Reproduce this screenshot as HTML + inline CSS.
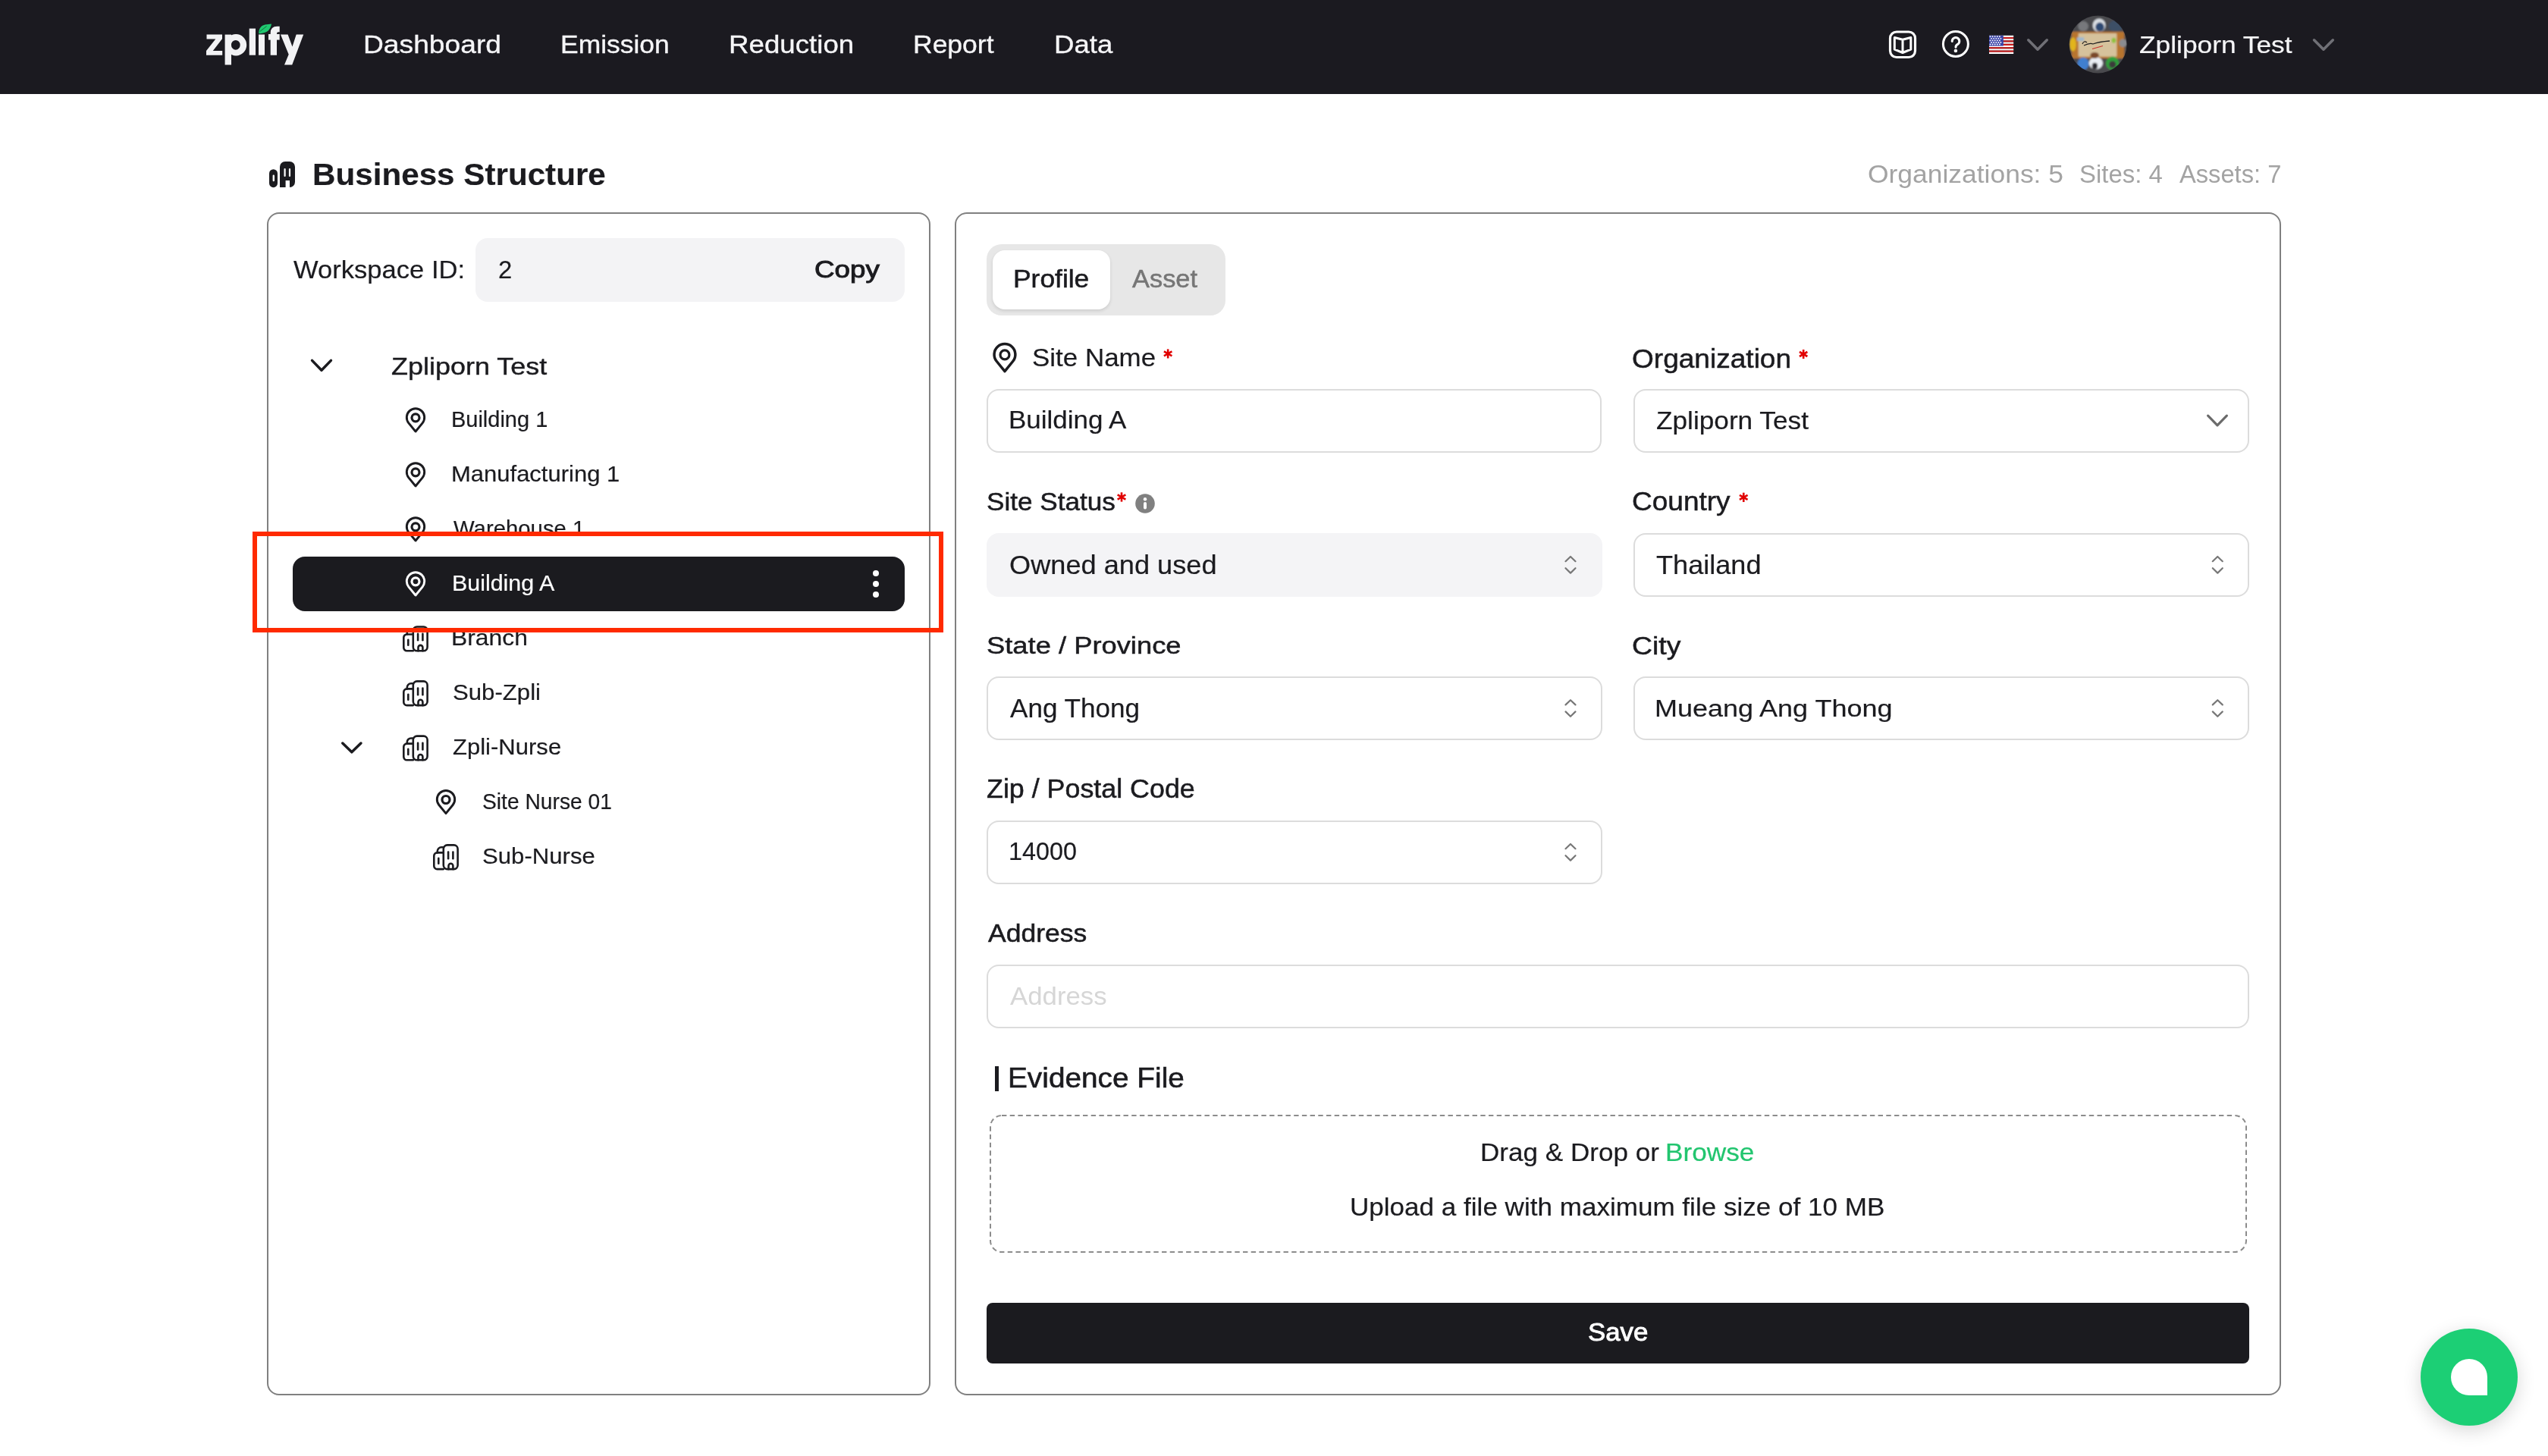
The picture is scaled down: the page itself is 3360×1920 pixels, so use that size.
<!DOCTYPE html>
<html><head><meta charset="utf-8"><title>Business Structure</title>
<style>
html,body{margin:0;padding:0;}
body{width:3360px;height:1920px;position:relative;overflow:hidden;background:#ffffff;font-family:"Liberation Sans",sans-serif;}
.a{position:absolute;box-sizing:border-box;}
.t{position:absolute;white-space:nowrap;line-height:1;transform-origin:0 0;font-family:"Liberation Sans",sans-serif;}
</style></head><body>
<div class="a" style="left:0;top:0;width:3360px;height:124px;background:#1b1a20"></div>
<div class="a" style="left:352px;top:280px;width:875px;height:1560px;border:2px solid #808080;border-radius:16px;background:#fff"></div>
<div class="a" style="left:1259px;top:280px;width:1749px;height:1560px;border:2px solid #808080;border-radius:16px;background:#fff"></div>
<div class="a" style="left:627px;top:314px;width:566px;height:84px;border-radius:16px;background:#f3f3f5"></div>
<div class="a" style="left:386px;top:734px;width:807px;height:72px;border-radius:16px;background:#1b1b1f"></div>
<div class="a" style="left:1301px;top:322px;width:315px;height:94px;border-radius:20px;background:#e7e7e7"></div>
<div class="a" style="left:1308.7px;top:329.7px;width:155.4px;height:78.3px;border-radius:16px;background:#fff;box-shadow:0 2px 4px rgba(0,0,0,0.12)"></div>
<div class="a" style="left:1301.3px;top:513px;width:811px;height:84px;border:2px solid #dcdcdc;border-radius:16px;background:#fff"></div>
<div class="a" style="left:2153.7px;top:513px;width:812.2px;height:84px;border:2px solid #dcdcdc;border-radius:16px;background:#fff"></div>
<div class="a" style="left:1301px;top:702.5px;width:812px;height:84px;border-radius:16px;background:#f4f4f6"></div>
<div class="a" style="left:2153.7px;top:703px;width:812.2px;height:84px;border:2px solid #dcdcdc;border-radius:16px;background:#fff"></div>
<div class="a" style="left:1301px;top:892.3px;width:811.5px;height:84px;border:2px solid #dcdcdc;border-radius:16px;background:#fff"></div>
<div class="a" style="left:2153.7px;top:892.2px;width:812.2px;height:84px;border:2px solid #dcdcdc;border-radius:16px;background:#fff"></div>
<div class="a" style="left:1301px;top:1082.3px;width:811.5px;height:84px;border:2px solid #dcdcdc;border-radius:16px;background:#fff"></div>
<div class="a" style="left:1301px;top:1272px;width:1665px;height:84px;border:2px solid #dcdcdc;border-radius:16px;background:#fff"></div>
<div class="a" style="left:1312.3px;top:1406px;width:4.7px;height:32.7px;background:#1b1b1f"></div>
<svg class="a" style="left:1305px;top:1469.5px" width="1658" height="182"><rect x="1" y="1" width="1656" height="180" rx="15" fill="none" stroke="#8c8c8c" stroke-width="2" stroke-dasharray="6.4 4.3"/></svg>
<div class="a" style="left:1301px;top:1717.6px;width:1665px;height:80px;border-radius:8px;background:#1b1b1f"></div>
<div class="a" style="left:3192px;top:1752px;width:128px;height:128px;border-radius:50%;background:#1ccf75;box-shadow:0 6px 24px rgba(0,0,0,0.16)"></div>
<div class="a" style="left:3232.3px;top:1792.3px;width:48px;height:48px;border-radius:24px 24px 0 24px;background:#fff"></div>
<svg class="a" style="left:0;top:0" width="3360" height="1920" viewBox="0 0 3360 1920">
<g fill="#f2f2f4">
<polygon points="272.5,45.5 293,45.5 293,51.3 280.8,66.9 293.2,66.9 293.2,72.7 272,72.7 272,67 284.3,51.4 272.5,51.4"/>
<rect x="296.6" y="45.6" width="8.4" height="39.9"/>
<path fill-rule="evenodd" d="M311.2,45 A14,14.2 0 1 1 311.2,73.4 A14,14.2 0 1 1 311.2,45 Z M310.8,52.9 A5.9,6.4 0 1 0 310.8,65.7 A5.9,6.4 0 1 0 310.8,52.9 Z"/>
<rect x="328.7" y="37.6" width="8.3" height="35.1"/>
<rect x="341" y="45.5" width="8" height="27.2"/>
<path d="M356.7,72.7 V43.5 Q356.7,34.8 365.5,34.8 H368.7 V42.2 H367 Q365,42.2 365,44.5 V72.7 Z"/>
<rect x="354" y="45" width="14.7" height="7.6"/>
<polygon points="370,45.5 379.6,45.5 385.5,61.5 390.7,45.5 400.2,45.5 385.2,85.5 375,85.5 380.7,71.8"/>
</g>
<path d="M341.2,44.3 C341.3,38.5 343.5,34 349.5,32.6 L358,31.4 C357.2,35.8 355,40.6 350.3,42.4 C347.3,43.6 344.2,44.1 341.2,44.3 Z" fill="#20c870"/><line x1="342.6" y1="41.6" x2="351.6" y2="34.6" stroke="#0e5a30" stroke-width="0.8"/>
<g fill="none" stroke="#ffffff" stroke-width="3.2" stroke-linejoin="round" stroke-linecap="round">
<rect x="2492.5" y="42" width="33" height="33.5" rx="8.5"/>
<path d="M2498.3,49.5 L2509,52.3 L2519.8,49.5 V65.2 L2509,69.5 L2498.3,65.2 Z M2509,52.3 V69" stroke-width="3"/>
<circle cx="2578.9" cy="58" r="16.5" stroke-width="3"/>
<path d="M2574.2,54.4 A4.8,4.8 0 1 1 2581.6,58.4 Q2579,59.8 2579,62.2" stroke-width="3"/>
</g>
<circle cx="2578.9" cy="67" r="2.3" fill="#fff"/>
<g><rect x="2623" y="46.80" width="32.2" height="2.20" fill="#fff"/><rect x="2623" y="49.00" width="32.2" height="2.20" fill="#c81e1e"/><rect x="2623" y="51.20" width="32.2" height="2.20" fill="#fff"/><rect x="2623" y="53.40" width="32.2" height="2.20" fill="#c81e1e"/><rect x="2623" y="55.60" width="32.2" height="2.20" fill="#fff"/><rect x="2623" y="57.80" width="32.2" height="2.20" fill="#c81e1e"/><rect x="2623" y="60.00" width="32.2" height="2.20" fill="#fff"/><rect x="2623" y="62.20" width="32.2" height="2.20" fill="#c81e1e"/><rect x="2623" y="64.40" width="32.2" height="2.20" fill="#fff"/><rect x="2623" y="66.60" width="32.2" height="2.20" fill="#c81e1e"/><rect x="2623" y="68.80" width="32.2" height="2.20" fill="#fff"/><rect x="2623" y="46.8" width="18.8" height="13.8" fill="#3a44a8"/><circle cx="2624.50" cy="48.30" r="0.95" fill="#fff"/><circle cx="2627.60" cy="48.30" r="0.95" fill="#fff"/><circle cx="2630.70" cy="48.30" r="0.95" fill="#fff"/><circle cx="2633.80" cy="48.30" r="0.95" fill="#fff"/><circle cx="2636.90" cy="48.30" r="0.95" fill="#fff"/><circle cx="2626.05" cy="50.85" r="0.95" fill="#fff"/><circle cx="2629.15" cy="50.85" r="0.95" fill="#fff"/><circle cx="2632.25" cy="50.85" r="0.95" fill="#fff"/><circle cx="2635.35" cy="50.85" r="0.95" fill="#fff"/><circle cx="2638.45" cy="50.85" r="0.95" fill="#fff"/><circle cx="2624.50" cy="53.40" r="0.95" fill="#fff"/><circle cx="2627.60" cy="53.40" r="0.95" fill="#fff"/><circle cx="2630.70" cy="53.40" r="0.95" fill="#fff"/><circle cx="2633.80" cy="53.40" r="0.95" fill="#fff"/><circle cx="2636.90" cy="53.40" r="0.95" fill="#fff"/><circle cx="2626.05" cy="55.95" r="0.95" fill="#fff"/><circle cx="2629.15" cy="55.95" r="0.95" fill="#fff"/><circle cx="2632.25" cy="55.95" r="0.95" fill="#fff"/><circle cx="2635.35" cy="55.95" r="0.95" fill="#fff"/><circle cx="2638.45" cy="55.95" r="0.95" fill="#fff"/><circle cx="2624.50" cy="58.50" r="0.95" fill="#fff"/><circle cx="2627.60" cy="58.50" r="0.95" fill="#fff"/><circle cx="2630.70" cy="58.50" r="0.95" fill="#fff"/><circle cx="2633.80" cy="58.50" r="0.95" fill="#fff"/><circle cx="2636.90" cy="58.50" r="0.95" fill="#fff"/></g>
<polyline points="2674.75,52.75 2687.0,65.25 2699.25,52.75" fill="none" stroke="#707076" stroke-width="3.5" stroke-linecap="round" stroke-linejoin="round"/>
<polyline points="3051.55,52.75 3063.95,65.25 3076.35,52.75" fill="none" stroke="#707076" stroke-width="3.5" stroke-linecap="round" stroke-linejoin="round"/>
<defs><clipPath id="av"><circle cx="2766.6" cy="58.5" r="38"/></clipPath>
<filter id="bl" x="-10%" y="-10%" width="120%" height="120%"><feGaussianBlur stdDeviation="0.9"/></filter></defs>
<g clip-path="url(#av)"><g filter="url(#bl)"><rect x="2728" y="20" width="78" height="78" fill="#4a4a4e"/><ellipse cx="2747.1" cy="34.6" rx="6.9" ry="6.6" fill="#77787c"/><ellipse cx="2768.1" cy="33.4" rx="8.4" ry="8.9" fill="#d9dde2"/><ellipse cx="2769.0" cy="35.7" rx="5.8" ry="6.1" fill="#2f4a72"/><ellipse cx="2790.0" cy="34.3" rx="9.5" ry="7.5" fill="#3d4f66"/><rect x="2731.8" y="41.8" width="69.5" height="35.2" rx="2" fill="#b8742f"/><rect x="2740.7" y="44.1" width="50.7" height="30.6" rx="1" fill="#d6c29c"/><rect x="2739.0" y="49.3" width="9.2" height="4.6" rx="0" fill="#9fb8d0"/><ellipse cx="2787.4" cy="53.3" rx="2.9" ry="3.5" fill="#8fc23a"/><ellipse cx="2733.5" cy="58.5" rx="4.3" ry="9.2" fill="#e2b51d"/><ellipse cx="2799.5" cy="56.8" rx="5.2" ry="5.2" fill="#8a8c90"/><ellipse cx="2747.1" cy="83.9" rx="7.5" ry="8.1" fill="#3f7fd0"/><ellipse cx="2763.8" cy="83.3" rx="9.2" ry="8.1" fill="#e8edf3"/><ellipse cx="2762.4" cy="87.1" rx="3.7" ry="4.3" fill="#2a2a30"/><ellipse cx="2785.6" cy="83.3" rx="8.5" ry="8.7" fill="#2da03a"/><ellipse cx="2785.7" cy="85.1" rx="4.6" ry="4.6" fill="#3a3a3a"/><ellipse cx="2762.1" cy="72.9" rx="5.8" ry="4.0" fill="#7a4a2a"/></g>
<path d="M2746,58 q2,-5 6,-2 M2748,60 q8,-4 12,-2 q8,-3 22,-4" stroke="#222" stroke-width="1.3" fill="none"/>
<line x1="2759" y1="64.5" x2="2773" y2="60.5" stroke="#c8302a" stroke-width="1.1"/>
</g>
<g fill="#1b1b1f">
<rect x="355" y="223.2" width="11" height="24" rx="5.5"/>
<path d="M369,247 V220 A7,7 0 0 1 376,213 H382 A7,7 0 0 1 389,220 V240 A7,7 0 0 1 382,247 V238 H376.6 V247 Z"/>
</g>
<g fill="#fff"><rect x="359.6" y="230.6" width="2.4" height="8.6" rx="1.2"/><rect x="374.5" y="222" width="2.2" height="11" rx="1.1"/><rect x="380.9" y="222" width="2.2" height="11" rx="1.1"/></g>
<polyline points="411.55,475.35 424.0,488.25 436.45,475.35" fill="none" stroke="#1b1b1f" stroke-width="3.5" stroke-linecap="round" stroke-linejoin="round"/>
<polyline points="451.75,980.05 463.85,991.85 475.95,980.05" fill="none" stroke="#1b1b1f" stroke-width="3.5" stroke-linecap="round" stroke-linejoin="round"/>
<g transform="translate(535,537.7) scale(1.0)" fill="none" stroke="#1b1b1f" stroke-width="2.90" stroke-linejoin="round">
<path d="M13,31.3 L3.87,20.12 A11.7,11.7 0 1 1 22.13,20.12 Z"/><circle cx="13" cy="13.1" r="5.0" stroke-width="3.20"/></g>
<g transform="translate(535,609.7) scale(1.0)" fill="none" stroke="#1b1b1f" stroke-width="2.90" stroke-linejoin="round">
<path d="M13,31.3 L3.87,20.12 A11.7,11.7 0 1 1 22.13,20.12 Z"/><circle cx="13" cy="13.1" r="5.0" stroke-width="3.20"/></g>
<g transform="translate(535,681.7) scale(1.0)" fill="none" stroke="#1b1b1f" stroke-width="2.90" stroke-linejoin="round">
<path d="M13,31.3 L3.87,20.12 A11.7,11.7 0 1 1 22.13,20.12 Z"/><circle cx="13" cy="13.1" r="5.0" stroke-width="3.20"/></g>
<g transform="translate(535,753.7) scale(1.0)" fill="none" stroke="#ffffff" stroke-width="2.90" stroke-linejoin="round">
<path d="M13,31.3 L3.87,20.12 A11.7,11.7 0 1 1 22.13,20.12 Z"/><circle cx="13" cy="13.1" r="5.0" stroke-width="3.20"/></g>
<g transform="translate(575,1041.4) scale(1.0)" fill="none" stroke="#1b1b1f" stroke-width="2.90" stroke-linejoin="round">
<path d="M13,31.3 L3.87,20.12 A11.7,11.7 0 1 1 22.13,20.12 Z"/><circle cx="13" cy="13.1" r="5.0" stroke-width="3.20"/></g>
<g transform="translate(531,825.2)" fill="none" stroke="#1b1b1f" stroke-width="2.6" stroke-linecap="round" stroke-linejoin="round">
<path d="M13.8,33 H5.5 A4.2,4.2 0 0 1 1.3,28.8 V15.5 A4.2,4.2 0 0 1 5.5,11.3 H13.8"/>
<path d="M5.8,11.3 V9.4 A5.2,5.2 0 0 1 11,4.2 H13.8"/>
<rect x="13.8" y="1.3" width="18.8" height="31.7" rx="5"/>
<line x1="7.3" y1="18.6" x2="7.3" y2="25.6"/><line x1="20.1" y1="10.5" x2="20.1" y2="19.1"/><line x1="26.4" y1="10.5" x2="26.4" y2="19.1"/>
<path d="M20.5,33 V28.6 A2.95,2.95 0 0 1 26.4,28.6 V33"/></g>
<g transform="translate(531,897.1)" fill="none" stroke="#1b1b1f" stroke-width="2.6" stroke-linecap="round" stroke-linejoin="round">
<path d="M13.8,33 H5.5 A4.2,4.2 0 0 1 1.3,28.8 V15.5 A4.2,4.2 0 0 1 5.5,11.3 H13.8"/>
<path d="M5.8,11.3 V9.4 A5.2,5.2 0 0 1 11,4.2 H13.8"/>
<rect x="13.8" y="1.3" width="18.8" height="31.7" rx="5"/>
<line x1="7.3" y1="18.6" x2="7.3" y2="25.6"/><line x1="20.1" y1="10.5" x2="20.1" y2="19.1"/><line x1="26.4" y1="10.5" x2="26.4" y2="19.1"/>
<path d="M20.5,33 V28.6 A2.95,2.95 0 0 1 26.4,28.6 V33"/></g>
<g transform="translate(531,969.3)" fill="none" stroke="#1b1b1f" stroke-width="2.6" stroke-linecap="round" stroke-linejoin="round">
<path d="M13.8,33 H5.5 A4.2,4.2 0 0 1 1.3,28.8 V15.5 A4.2,4.2 0 0 1 5.5,11.3 H13.8"/>
<path d="M5.8,11.3 V9.4 A5.2,5.2 0 0 1 11,4.2 H13.8"/>
<rect x="13.8" y="1.3" width="18.8" height="31.7" rx="5"/>
<line x1="7.3" y1="18.6" x2="7.3" y2="25.6"/><line x1="20.1" y1="10.5" x2="20.1" y2="19.1"/><line x1="26.4" y1="10.5" x2="26.4" y2="19.1"/>
<path d="M20.5,33 V28.6 A2.95,2.95 0 0 1 26.4,28.6 V33"/></g>
<g transform="translate(571,1113.1)" fill="none" stroke="#1b1b1f" stroke-width="2.6" stroke-linecap="round" stroke-linejoin="round">
<path d="M13.8,33 H5.5 A4.2,4.2 0 0 1 1.3,28.8 V15.5 A4.2,4.2 0 0 1 5.5,11.3 H13.8"/>
<path d="M5.8,11.3 V9.4 A5.2,5.2 0 0 1 11,4.2 H13.8"/>
<rect x="13.8" y="1.3" width="18.8" height="31.7" rx="5"/>
<line x1="7.3" y1="18.6" x2="7.3" y2="25.6"/><line x1="20.1" y1="10.5" x2="20.1" y2="19.1"/><line x1="26.4" y1="10.5" x2="26.4" y2="19.1"/>
<path d="M20.5,33 V28.6 A2.95,2.95 0 0 1 26.4,28.6 V33"/></g>
<g fill="#fff"><circle cx="1155" cy="756" r="4"/><circle cx="1155" cy="770" r="4"/><circle cx="1155" cy="784" r="4"/></g>
<g transform="translate(1309.5,452.3) scale(1.19)" fill="none" stroke="#1b1b1f" stroke-width="2.94" stroke-linejoin="round">
<path d="M13,31.3 L3.87,20.12 A11.7,11.7 0 1 1 22.13,20.12 Z"/><circle cx="13" cy="13.1" r="5.0" stroke-width="2.69"/></g>
<g stroke="#e10000" stroke-width="2.6"><line x1="1540.15" y1="460.40" x2="1540.15" y2="472.50"/><line x1="1534.91" y1="463.43" x2="1545.39" y2="469.47"/><line x1="1545.39" y1="463.43" x2="1534.91" y2="469.47"/></g>
<g stroke="#e10000" stroke-width="2.6"><line x1="2378.15" y1="461.00" x2="2378.15" y2="473.00"/><line x1="2372.95" y1="464.00" x2="2383.35" y2="470.00"/><line x1="2383.35" y1="464.00" x2="2372.95" y2="470.00"/></g>
<g stroke="#e10000" stroke-width="2.6"><line x1="1479.00" y1="649.30" x2="1479.00" y2="661.60"/><line x1="1473.67" y1="652.38" x2="1484.33" y2="658.53"/><line x1="1484.33" y1="652.38" x2="1473.67" y2="658.53"/></g>
<g stroke="#e10000" stroke-width="2.6"><line x1="2299.25" y1="649.70" x2="2299.25" y2="662.00"/><line x1="2293.92" y1="652.78" x2="2304.58" y2="658.92"/><line x1="2304.58" y1="652.78" x2="2293.92" y2="658.92"/></g>
<circle cx="1510" cy="664" r="12.8" fill="#808080"/><circle cx="1510" cy="658.3" r="2.2" fill="#fff"/><rect x="1508" y="662" width="4" height="9.6" rx="2" fill="#fff"/>
<polyline points="2911.6,548.2 2924.0,560.9 2936.4,548.2" fill="none" stroke="#6b6b6b" stroke-width="3.2" stroke-linecap="round" stroke-linejoin="round"/>
<g fill="none" stroke="#777" stroke-width="2.2" stroke-linecap="round" stroke-linejoin="round">
<polyline points="2064.5,740.2 2071,734 2077.5,740.2"/><polyline points="2064.5,749.2 2071,755.6 2077.5,749.2"/></g>
<g fill="none" stroke="#777" stroke-width="2.2" stroke-linecap="round" stroke-linejoin="round">
<polyline points="2917.8,740.2 2924.3,734 2930.8,740.2"/><polyline points="2917.8,749.2 2924.3,755.6 2930.8,749.2"/></g>
<g fill="none" stroke="#777" stroke-width="2.2" stroke-linecap="round" stroke-linejoin="round">
<polyline points="2064.5,929.4000000000001 2071,923.2 2077.5,929.4000000000001"/><polyline points="2064.5,938.4000000000001 2071,944.8000000000001 2077.5,938.4000000000001"/></g>
<g fill="none" stroke="#777" stroke-width="2.2" stroke-linecap="round" stroke-linejoin="round">
<polyline points="2917.8,929.4000000000001 2924.3,923.2 2930.8,929.4000000000001"/><polyline points="2917.8,938.4000000000001 2924.3,944.8000000000001 2930.8,938.4000000000001"/></g>
<g fill="none" stroke="#777" stroke-width="2.2" stroke-linecap="round" stroke-linejoin="round">
<polyline points="2064.5,1119.2 2071,1113 2077.5,1119.2"/><polyline points="2064.5,1128.2 2071,1134.6 2077.5,1128.2"/></g>
</svg>
<div class="t" style="left:478.69px;top:42.28px;font-size:33.33px;font-weight:400;color:#f5f5f7;transform:scaleX(1.1161);-webkit-text-stroke:0.35px #f5f5f7;">Dashboard</div>
<div class="t" style="left:738.73px;top:42.28px;font-size:33.33px;font-weight:400;color:#f5f5f7;transform:scaleX(1.0631);-webkit-text-stroke:0.35px #f5f5f7;">Emission</div>
<div class="t" style="left:960.83px;top:42.28px;font-size:33.33px;font-weight:400;color:#f5f5f7;transform:scaleX(1.1008);-webkit-text-stroke:0.35px #f5f5f7;">Reduction</div>
<div class="t" style="left:1204.23px;top:42.28px;font-size:33.33px;font-weight:400;color:#f5f5f7;transform:scaleX(1.0650);-webkit-text-stroke:0.35px #f5f5f7;">Report</div>
<div class="t" style="left:1390.24px;top:42.28px;font-size:33.33px;font-weight:400;color:#f5f5f7;transform:scaleX(1.0968);-webkit-text-stroke:0.35px #f5f5f7;">Data</div>
<div class="t" style="left:2820.60px;top:42.56px;font-size:32.17px;font-weight:400;color:#f5f5f7;transform:scaleX(1.0983);-webkit-text-stroke:0.2px #f5f5f7;">Zpliporn Test</div>
<div class="t" style="left:411.56px;top:210.13px;font-size:40.00px;font-weight:700;color:#1b1b1f;transform:scaleX(1.0546);-webkit-text-stroke:0.15px #1b1b1f;">Business Structure</div>
<div class="t" style="left:2463.34px;top:211.66px;font-size:34.06px;font-weight:400;color:#a3a3a3;transform:scaleX(1.0407);">Organizations: 5</div>
<div class="t" style="left:2741.97px;top:211.66px;font-size:34.06px;font-weight:400;color:#a3a3a3;transform:scaleX(0.9671);">Sites: 4</div>
<div class="t" style="left:2874.00px;top:211.66px;font-size:34.06px;font-weight:400;color:#a3a3a3;transform:scaleX(0.9590);">Assets: 7</div>
<div class="t" style="left:387.00px;top:339.54px;font-size:32.90px;font-weight:400;color:#1b1b1f;transform:scaleX(1.0511);-webkit-text-stroke:0.2px #1b1b1f;">Workspace ID:</div>
<div class="t" style="left:657.06px;top:339.54px;font-size:32.90px;font-weight:400;color:#1b1b1f;transform:scaleX(0.9986);-webkit-text-stroke:0.2px #1b1b1f;">2</div>
<div class="t" style="left:1074.07px;top:339.46px;font-size:32.17px;font-weight:400;color:#1b1b1f;transform:scaleX(1.1440);-webkit-text-stroke:1.0px #1b1b1f;">Copy</div>
<div class="t" style="left:516.07px;top:466.76px;font-size:32.17px;font-weight:400;color:#1b1b1f;transform:scaleX(1.1190);-webkit-text-stroke:0.4px #1b1b1f;">Zpliporn Test</div>
<div class="t" style="left:595.44px;top:538.22px;font-size:29.86px;font-weight:400;color:#1b1b1f;transform:scaleX(0.9703);-webkit-text-stroke:0.2px #1b1b1f;">Building 1</div>
<div class="t" style="left:595.48px;top:610.22px;font-size:29.86px;font-weight:400;color:#1b1b1f;transform:scaleX(1.0378);-webkit-text-stroke:0.2px #1b1b1f;">Manufacturing 1</div>
<div class="t" style="left:597.90px;top:682.22px;font-size:29.86px;font-weight:400;color:#1b1b1f;transform:scaleX(0.9820);-webkit-text-stroke:0.2px #1b1b1f;">Warehouse 1</div>
<div class="t" style="left:595.53px;top:754.22px;font-size:29.86px;font-weight:400;color:#ffffff;transform:scaleX(1.0178);-webkit-text-stroke:0.2px #ffffff;">Building A</div>
<div class="t" style="left:595.41px;top:826.22px;font-size:29.86px;font-weight:400;color:#1b1b1f;transform:scaleX(1.0664);-webkit-text-stroke:0.2px #1b1b1f;">Branch</div>
<div class="t" style="left:596.83px;top:898.22px;font-size:29.86px;font-weight:400;color:#1b1b1f;transform:scaleX(1.0437);-webkit-text-stroke:0.2px #1b1b1f;">Sub-Zpli</div>
<div class="t" style="left:596.83px;top:970.22px;font-size:29.86px;font-weight:400;color:#1b1b1f;transform:scaleX(1.0395);-webkit-text-stroke:0.2px #1b1b1f;">Zpli-Nurse</div>
<div class="t" style="left:636.22px;top:1042.22px;font-size:29.86px;font-weight:400;color:#1b1b1f;transform:scaleX(0.9450);-webkit-text-stroke:0.2px #1b1b1f;">Site Nurse 01</div>
<div class="t" style="left:636.13px;top:1114.22px;font-size:29.86px;font-weight:400;color:#1b1b1f;transform:scaleX(1.0430);-webkit-text-stroke:0.2px #1b1b1f;">Sub-Nurse</div>
<div class="t" style="left:1335.94px;top:352.27px;font-size:32.75px;font-weight:400;color:#1b1b1f;transform:scaleX(1.0803);-webkit-text-stroke:0.55px #1b1b1f;">Profile</div>
<div class="t" style="left:1493.10px;top:352.27px;font-size:32.75px;font-weight:400;color:#767676;transform:scaleX(1.0509);-webkit-text-stroke:0.5px #767676;">Asset</div>
<div class="t" style="left:1361.31px;top:456.49px;font-size:32.61px;font-weight:400;color:#1b1b1f;transform:scaleX(1.0714);-webkit-text-stroke:0.2px #1b1b1f;">Site Name</div>
<div class="t" style="left:2152.26px;top:455.59px;font-size:34.49px;font-weight:400;color:#1b1b1f;transform:scaleX(1.0744);-webkit-text-stroke:0.5px #1b1b1f;">Organization</div>
<div class="t" style="left:1329.87px;top:538.24px;font-size:32.90px;font-weight:400;color:#1b1b1f;transform:scaleX(1.0622);-webkit-text-stroke:0.2px #1b1b1f;">Building A</div>
<div class="t" style="left:2183.70px;top:538.48px;font-size:33.33px;font-weight:400;color:#1b1b1f;transform:scaleX(1.0564);-webkit-text-stroke:0.2px #1b1b1f;">Zpliporn Test</div>
<div class="t" style="left:1300.80px;top:645.20px;font-size:33.19px;font-weight:400;color:#1b1b1f;transform:scaleX(1.0592);-webkit-text-stroke:0.5px #1b1b1f;">Site Status</div>
<div class="t" style="left:2152.26px;top:644.25px;font-size:34.78px;font-weight:400;color:#1b1b1f;transform:scaleX(1.0644);-webkit-text-stroke:0.5px #1b1b1f;">Country</div>
<div class="t" style="left:1330.60px;top:727.62px;font-size:34.35px;font-weight:400;color:#1b1b1f;transform:scaleX(1.0540);-webkit-text-stroke:0.2px #1b1b1f;">Owned and used</div>
<div class="t" style="left:2184.24px;top:727.62px;font-size:34.35px;font-weight:400;color:#1b1b1f;transform:scaleX(1.0519);-webkit-text-stroke:0.2px #1b1b1f;">Thailand</div>
<div class="t" style="left:1300.86px;top:836.00px;font-size:31.88px;font-weight:400;color:#1b1b1f;transform:scaleX(1.1401);-webkit-text-stroke:0.5px #1b1b1f;">State / Province</div>
<div class="t" style="left:2152.35px;top:835.69px;font-size:32.61px;font-weight:400;color:#1b1b1f;transform:scaleX(1.1459);-webkit-text-stroke:0.5px #1b1b1f;">City</div>
<div class="t" style="left:1332.30px;top:916.62px;font-size:34.35px;font-weight:400;color:#1b1b1f;transform:scaleX(1.0215);-webkit-text-stroke:0.2px #1b1b1f;">Ang Thong</div>
<div class="t" style="left:2182.29px;top:917.88px;font-size:32.03px;font-weight:400;color:#1b1b1f;transform:scaleX(1.1240);-webkit-text-stroke:0.2px #1b1b1f;">Mueang Ang Thong</div>
<div class="t" style="left:1300.88px;top:1023.34px;font-size:34.20px;font-weight:400;color:#1b1b1f;transform:scaleX(1.0477);-webkit-text-stroke:0.5px #1b1b1f;">Zip / Postal Code</div>
<div class="t" style="left:1330.28px;top:1107.27px;font-size:32.75px;font-weight:400;color:#1b1b1f;transform:scaleX(0.9873);-webkit-text-stroke:0.2px #1b1b1f;">14000</div>
<div class="t" style="left:1302.60px;top:1214.94px;font-size:32.32px;font-weight:400;color:#1b1b1f;transform:scaleX(1.1000);-webkit-text-stroke:0.5px #1b1b1f;">Address</div>
<div class="t" style="left:1332.30px;top:1297.48px;font-size:33.33px;font-weight:400;color:#d6d6d6;transform:scaleX(1.0442);">Address</div>
<div class="t" style="left:1329.07px;top:1404.12px;font-size:36.23px;font-weight:400;color:#1b1b1f;transform:scaleX(1.0708);-webkit-text-stroke:0.6px #1b1b1f;">Evidence File</div>
<div class="t" style="left:1951.96px;top:1503.13px;font-size:33.62px;font-weight:400;color:#1b1b1f;transform:scaleX(1.0434);-webkit-text-stroke:0.2px #1b1b1f;">Drag &amp; Drop or</div>
<div class="t" style="left:2195.95px;top:1503.13px;font-size:33.62px;font-weight:400;color:#22c56f;transform:scaleX(1.0479);-webkit-text-stroke:0.2px #22c56f;">Browse</div>
<div class="t" style="left:1780.21px;top:1576.27px;font-size:32.75px;font-weight:400;color:#1b1b1f;transform:scaleX(1.0704);-webkit-text-stroke:0.2px #1b1b1f;">Upload a file with maximum file size of 10 MB</div>
<div class="t" style="left:2094.31px;top:1740.41px;font-size:33.77px;font-weight:400;color:#ffffff;transform:scaleX(1.0316);-webkit-text-stroke:0.9px #ffffff;">Save</div>
<div class="a" style="left:333px;top:701px;width:910.5px;height:132.5px;border:6px solid #ff2a00"></div>
</body></html>
